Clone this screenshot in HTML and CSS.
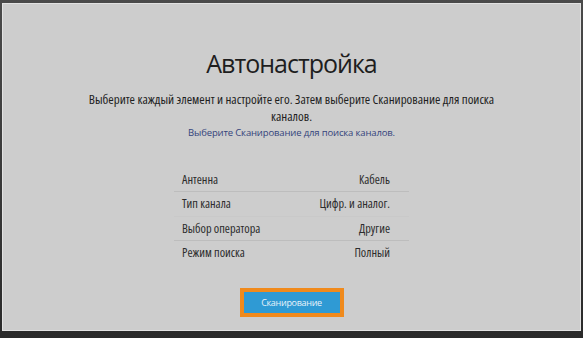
FILE: index.html
```html
<!DOCTYPE html>
<html lang="ru">
<head>
<meta charset="utf-8">
<title>Автонастройка</title>
<link rel="stylesheet" href="styles.css">
</head>
<body>
<div class="tv">
  <div class="screen">
    <h1 class="title">Автонастройка</h1>
    <p class="desc">Выберите каждый элемент и настройте его. Затем выберите Сканирование для поиска каналов.</p>
    <p class="hint">Выберите Сканирование для поиска каналов.</p>
    <div class="list">
      <div class="row line"><span>Антенна</span><span>Кабель</span></div>
      <div class="row faint"><span>Тип канала</span><span>Цифр. и аналог.</span></div>
      <div class="row line"><span>Выбор оператора</span><span>Другие</span></div>
      <div class="row"><span>Режим поиска</span><span>Полный</span></div>
    </div>
    <div class="scan"><span class="scan-inner">Сканирование</span></div>
  </div>
</div>
</body>
</html>
```

FILE: styles.css
```css
html, body {
  margin: 0;
  padding: 0;
  background: #2f2f2f;
}
.tv {
  width: 583px;
  height: 338px;
  box-sizing: border-box;
  padding: 3px 2px 7px 2px;
  background: linear-gradient(#4a4a4a, #2a2a2a);
}
.screen {
  height: 100%;
  box-sizing: border-box;
  background: #cdcdcd;
  border: 1px solid #e2e2e2;
  display: flex;
  flex-direction: column;
  align-items: center;
  font-family: "Open Sans", "Noto Sans", sans-serif;
  color: #202020;
  padding-top: 42px;
}
.title {
  margin: 0;
  font-weight: 400;
  font-size: 25px;
  letter-spacing: -1px;
  line-height: 34px;
  color: #1e1e1e;
}
.desc {
  margin: 11px 0 0 0;
  width: 420px;
  text-align: center;
  font-size: 13px;
  font-stretch: 80%;
  line-height: 17px;
  color: #1e1e1e;
}
.hint {
  margin: 0;
  font-size: 9.5px;
  letter-spacing: -0.15px;
  line-height: 15px;
  color: #34447c;
}
.list {
  margin-top: 28px;
  width: 235px;
}
.row {
  display: flex;
  justify-content: space-between;
  padding: 0 19px 0 8px;
  height: 24.3px;
  line-height: 24px;
  font-size: 12.3px;
  font-stretch: 80%;
  color: #2c2c2c;
  box-sizing: border-box;
}
.line {
  border-bottom: 1px solid #bdbdbd;
}
.faint {
  border-bottom: 1px solid #c9c9c9;
}
.scan {
  margin-top: 23px;
  border: 4px solid #f08a1c;
}
.scan-inner {
  display: block;
  width: 96px;
  height: 21px;
  line-height: 21px;
  text-align: center;
  background: #2f9ad4;
  color: #e8f3fa;
  font-size: 9px;
  letter-spacing: -0.3px;
}
```
